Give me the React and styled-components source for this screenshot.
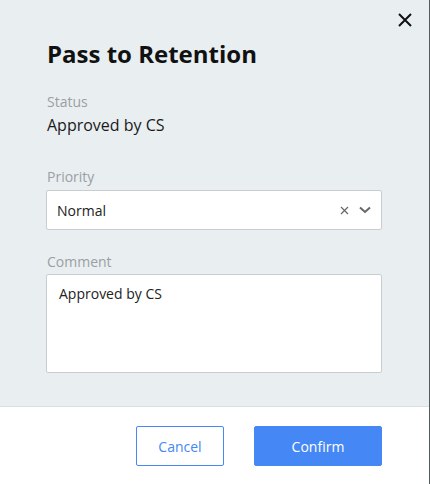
import React from "react";
import styled, { createGlobalStyle } from "styled-components";

const Global = createGlobalStyle`
  html, body { margin: 0; padding: 0; background: #ffffff; }
  body { font-family: "Open Sans", "Noto Sans", Arial, sans-serif; }
  * { box-sizing: border-box; }
`;

const Modal = styled.div`
  position: relative;
  width: 430px;
  height: 484px;
  display: flex;
  flex-direction: column;
  border-right: 1px solid #555a5e;
  background: #ffffff;
`;

const Body = styled.div`
  height: 407px;
  background: #e9eef1;
  border-bottom: 1px solid #dcdfe2;
  padding: 39px 47px 0 46px;
  display: flex;
  flex-direction: column;
`;

const CloseButton = styled.button`
  position: absolute;
  top: 11px;
  right: 15px;
  width: 18px;
  height: 18px;
  padding: 0;
  border: 0;
  background: transparent;
  display: flex;
  align-items: center;
  justify-content: center;
  cursor: pointer;
`;

const Title = styled.h2`
  margin: 0 0 0 1px;
  font-size: 24px;
  line-height: 30px;
  font-weight: 700;
  color: #111111;
`;

const Field = styled.div`
  display: flex;
  flex-direction: column;
  margin-top: ${(p) => p.$top}px;
`;

const Label = styled.div`
  margin: 0 0 ${(p) => p.$gap}px 1px;
  font-size: 14px;
  line-height: 20px;
  color: #9b9fa3;
`;

const Value = styled.div`
  margin-left: 1px;
  font-size: 16px;
  line-height: 22px;
  color: #1a1a1a;
`;

const Select = styled.div`
  height: 40px;
  background: #ffffff;
  border: 1px solid #c9cdd1;
  border-radius: 2px;
  display: flex;
  align-items: center;
  padding: 0 10px 0 10px;
`;

const SelectText = styled.span`
  flex: 1;
  font-size: 14px;
  color: #222222;
`;

const SelectIcons = styled.span`
  display: flex;
  align-items: center;
  gap: 10px;
`;

const TextArea = styled.div`
  height: 99px;
  background: #ffffff;
  border: 1px solid #c9cdd1;
  border-radius: 2px;
  padding: 9px 12px;
  font-size: 14px;
  line-height: 20px;
  color: #222222;
`;

const Footer = styled.div`
  flex: 1;
  display: flex;
  justify-content: flex-end;
  align-items: flex-start;
  gap: 30px;
  padding: 19px 47px 0 0;
`;

const Button = styled.button`
  height: 40px;
  width: ${(p) => p.$w}px;
  border-radius: 2px;
  font-family: "Open Sans", "Noto Sans", Arial, sans-serif;
  font-size: 14px;
  cursor: pointer;
  border: 1px solid #4588f5;
  background: ${(p) => (p.$primary ? "#4588f5" : "#ffffff")};
  color: ${(p) => (p.$primary ? "#ffffff" : "#4588f5")};
`;

export default function App() {
  return (
    <>
      <Global />
      <Modal>
        <CloseButton aria-label="Close">
          <svg width="14" height="14" viewBox="0 0 14 14">
            <path d="M1 1L13 13M13 1L1 13" stroke="#111" strokeWidth="2" />
          </svg>
        </CloseButton>
        <Body>
          <Title>Pass to Retention</Title>
          <Field $top={23}>
            <Label $gap={2}>Status</Label>
            <Value>Approved by CS</Value>
          </Field>
          <Field $top={31}>
            <Label $gap={3}>Priority</Label>
            <Select>
              <SelectText>Normal</SelectText>
              <SelectIcons>
                <svg width="9" height="9" viewBox="0 0 9 9">
                  <path d="M1 1L8 8M8 1L1 8" stroke="#666" strokeWidth="1.2" />
                </svg>
                <svg width="12" height="8" viewBox="0 0 12 8">
                  <path d="M1 1.5L6 6L11 1.5" stroke="#666" strokeWidth="2" fill="none" />
                </svg>
              </SelectIcons>
            </Select>
          </Field>
          <Field $top={22}>
            <Label $gap={2}>Comment</Label>
            <TextArea>Approved by CS</TextArea>
          </Field>
        </Body>
        <Footer>
          <Button $w={88}>Cancel</Button>
          <Button $w={128} $primary>Confirm</Button>
        </Footer>
      </Modal>
    </>
  );
}
